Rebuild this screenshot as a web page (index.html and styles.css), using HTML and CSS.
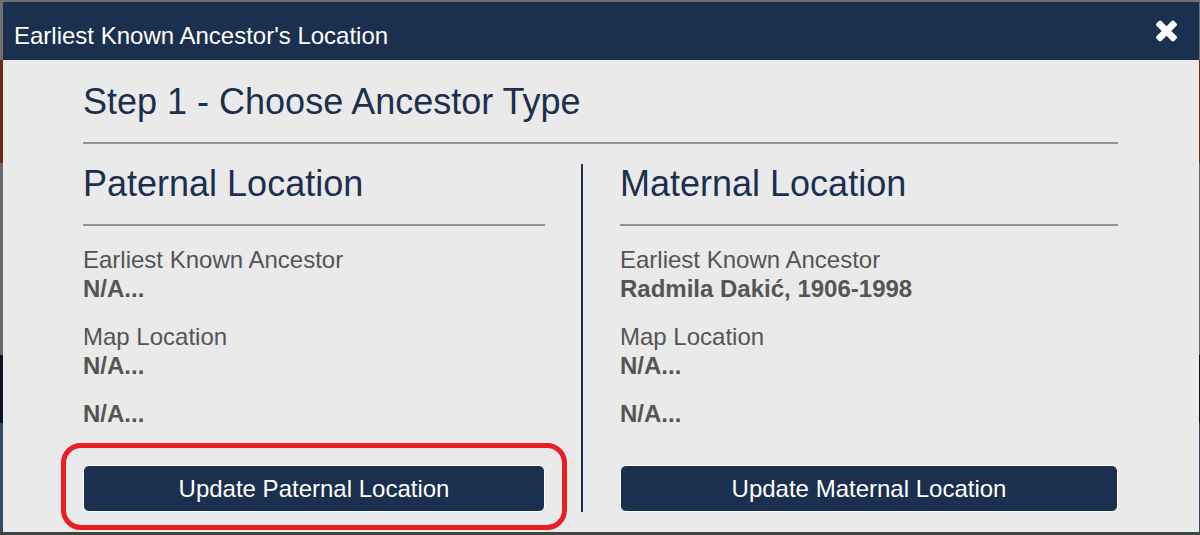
FILE: index.html
```html
<!DOCTYPE html>
<html lang="en">
<head>
<meta charset="utf-8">
<title>Earliest Known Ancestor's Location</title>
<link rel="stylesheet" href="styles.css">
</head>
<body>
<div class="modal">
  <div class="modal-header">
    <div class="modal-title">Earliest Known Ancestor's Location</div>
    <svg class="close" viewBox="110 366 1188 1188" aria-label="Close">
      <path fill="#ffffff" d="M1298 1322q0 40-28 68l-136 136q-28 28-68 28t-68-28l-294-294-294 294q-28 28-68 28t-68-28l-136-136q-28-28-28-68t28-68l294-294-294-294q-28-28-28-68t28-68l136-136q28-28 68-28t68 28l294 294 294-294q28-28 68-28t68 28l136 136q28 28 28 68t-28 68l-294 294 294 294q28 28 28 68z"/>
    </svg>
  </div>
  <div class="modal-body">
    <h2 class="step-title">Step 1 - Choose Ancestor Type</h2>
    <hr class="rule">
    <div class="columns">
      <div class="col">
        <div class="col-info">
          <h3 class="col-title">Paternal Location</h3>
          <hr class="rule">
          <div class="field">
            <div class="field-label">Earliest Known Ancestor</div>
            <div class="field-value">N/A...</div>
          </div>
          <div class="field">
            <div class="field-label">Map Location</div>
            <div class="field-value">N/A...</div>
          </div>
          <div class="field">
            <div class="field-value">N/A...</div>
          </div>
        </div>
        <div class="btn-wrap">
          <button class="btn">Update Paternal Location</button>
          <div class="highlight"></div>
        </div>
      </div>
      <div class="divider"></div>
      <div class="col">
        <div class="col-info">
          <h3 class="col-title">Maternal Location</h3>
          <hr class="rule">
          <div class="field">
            <div class="field-label">Earliest Known Ancestor</div>
            <div class="field-value">Radmila Dakić, 1906-1998</div>
          </div>
          <div class="field">
            <div class="field-label">Map Location</div>
            <div class="field-value">N/A...</div>
          </div>
          <div class="field">
            <div class="field-value">N/A...</div>
          </div>
        </div>
        <div class="btn-wrap">
          <button class="btn">Update Maternal Location</button>
        </div>
      </div>
    </div>
  </div>
</div>
</body>
</html>
```
FILE: styles.css
```css
* { box-sizing: border-box; }

html, body {
  margin: 0;
  padding: 0;
  height: 535px;
  overflow: hidden;
}

body {
  font-family: "Liberation Sans", Arial, sans-serif;
  background: linear-gradient(to bottom,
    #6e6e6e 0, #6e6e6e 60px,
    #6b2e0a 60px, #6b2e0a 163px,
    #6a6a6a 163px, #6a6a6a 355px,
    #0d1520 355px, #0d1520 423px,
    #36486a 423px, #36486a 532px,
    #3c4641 532px, #3c4641 535px);
}

.modal {
  margin: 2px 1px 0 3px;
  background: #eaeaea;
}

.modal-header {
  background: #1b2f4e;
  height: 58px;
  padding: 19px 22px 10px 11px;
  display: flex;
  justify-content: space-between;
  align-items: flex-start;
}

.modal-title {
  color: #ffffff;
  font-size: 24px;
  line-height: 29px;
}

.close {
  width: 21px;
  height: 22px;
  margin-top: -1px;
  display: block;
}

.modal-body {
  padding: 21px 81px 20px 80px;
}

.step-title,
.col-title {
  margin: 0;
  font-size: 36px;
  line-height: 41px;
  font-weight: normal;
  color: #1b2f4e;
}

.rule {
  margin: 20px 0 0 0;
  border: 0;
  height: 2px;
  background: #929292;
}

.columns {
  margin-top: 19px;
  display: grid;
  grid-template-columns: 462px 2px 1fr;
  column-gap: 36px;
}

.columns > .col:last-child {
  margin-left: 1px;
}

.col {
  display: flex;
  flex-direction: column;
}

.col-info {
  padding-bottom: 18px;
}

.divider {
  background: #1b2f4e;
  margin-top: 1px;
}

.field {
  margin-top: 19px;
  font-size: 24px;
  line-height: 29px;
  color: #555555;
}

.field-value {
  font-weight: bold;
}

.btn-wrap {
  position: relative;
  margin-top: 19px;
}

.btn {
  display: block;
  width: 100%;
  height: 47px;
  background: #1b2f4e;
  color: #ffffff;
  border: 1px solid #ffffff;
  border-radius: 6px;
  font-family: "Liberation Sans", Arial, sans-serif;
  font-size: 24px;
  padding: 0;
}

.highlight {
  position: absolute;
  top: -22px;
  left: -22px;
  right: -22px;
  bottom: -18px;
  border: 5px solid #ec1c24;
  border-radius: 20px;
  pointer-events: none;
}
```
